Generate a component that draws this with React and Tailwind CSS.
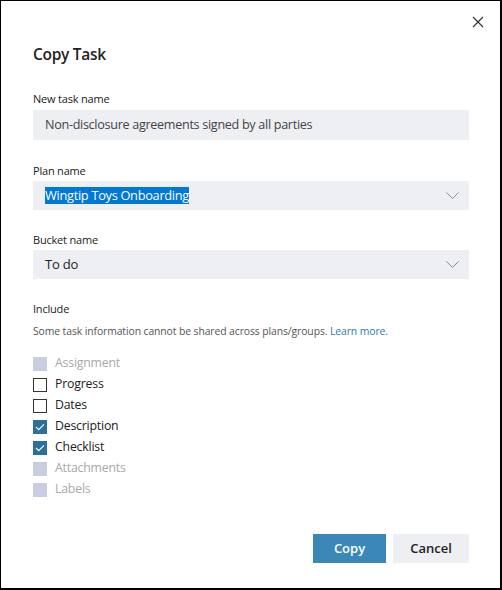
import { useState } from 'react';

const items = [
  { label: 'Assignment', state: 'disabled' },
  { label: 'Progress', state: 'off' },
  { label: 'Dates', state: 'off' },
  { label: 'Description', state: 'on' },
  { label: 'Checklist', state: 'on' },
  { label: 'Attachments', state: 'disabled' },
  { label: 'Labels', state: 'disabled' },
];

const Chevron = () => (
  <svg width="13" height="7" viewBox="0 0 13 7" fill="none" className="text-[#8a8a8a]">
    <path d="M0.5 0.5l6 6 6-6" stroke="currentColor" strokeWidth="1" />
  </svg>
);

const Check = ({ state }) => {
  if (state === 'disabled') return <span className="w-[14px] h-[14px] bg-[#c8cde0]" />;
  if (state === 'off') return <span className="w-[14px] h-[14px] border border-[#333] bg-white" />;
  return (
    <span className="w-[14px] h-[14px] bg-[#2c6e9c] flex items-center justify-center">
      <svg width="10" height="8" viewBox="0 0 10 8" fill="none">
        <path d="M1 4l2.7 2.7L9 1.4" stroke="#fff" strokeWidth="1.1" />
      </svg>
    </span>
  );
};

export default function App() {
  const [name] = useState('Non-disclosure agreements signed by all parties');
  return (
    <div className="w-[502px] h-[590px] bg-white border-l border-t border-r-2 border-b-2 border-black text-[#222] font-['Open_Sans',sans-serif] flex flex-col relative">
      {/* close */}
      <button className="absolute right-[16px] top-[15px] w-[12px] h-[12px]">
        <svg width="12" height="12" viewBox="0 0 12 12" fill="none">
          <path d="M1 1l10 10M11 1L1 11" stroke="#333" strokeWidth="1.2" />
        </svg>
      </button>

      <div className="pl-[32px] pr-[31px] pt-[42px]">
        <h1 className="text-[15.5px] font-semibold leading-[22px] tracking-[-0.3px]">Copy Task</h1>

        <label className="block mt-[26px] text-[11px] leading-[16px] tracking-[-0.2px]">New task name</label>
        <div className="mt-[3px] h-[30px] bg-[#eeeff3] flex items-center pl-[12px] text-[12.6px] text-[#444] tracking-[-0.3px]">
          {name}
        </div>

        <label className="block mt-[23px] text-[11px] leading-[16px] tracking-[-0.2px]">Plan name</label>
        <div className="mt-[2px] h-[29px] bg-[#eeeff3] flex items-center justify-between pl-[12px] pr-[10px]">
          <span className="bg-[#0078d7] text-white text-[12.8px] leading-[17px] tracking-[-0.3px]">Wingtip Toys Onboarding</span>
          <Chevron />
        </div>

        <label className="block mt-[22px] text-[11px] leading-[16px] tracking-[-0.2px]">Bucket name</label>
        <div className="mt-[2px] h-[29px] bg-[#eeeff3] flex items-center justify-between pl-[12px] pr-[10px]">
          <span className="text-[13px] tracking-[-0.2px]">To do</span>
          <Chevron />
        </div>

        <div className="mt-[22px] text-[11px] leading-[16px] tracking-[-0.2px]">Include</div>
        <div className="mt-[6px] text-[10.4px] leading-[16px] text-[#555] tracking-[-0.1px]">
          Some task information cannot be shared across plans/groups. <span className="text-[#2b79b4]">Learn more.</span>
        </div>

        <div className="mt-[14px] flex flex-col">
          {items.map((it) => (
            <div key={it.label} className="h-[21px] flex items-center gap-[8px]">
              <Check state={it.state} />
              <span className={`text-[12.3px] tracking-[-0.2px] ${it.state === 'disabled' ? 'text-[#a8a8a8]' : 'text-[#222]'}`}>
                {it.label}
              </span>
            </div>
          ))}
        </div>
      </div>

      <div className="mt-auto mb-[25px] flex justify-end gap-[7px] pr-[31px]">
        <button className="w-[73px] h-[29px] bg-[#3b87b8] text-white text-[13px] font-semibold">Copy</button>
        <button className="w-[76px] h-[29px] bg-[#eeeff3] text-[#222] text-[13px] font-semibold">Cancel</button>
      </div>
    </div>
  );
}
